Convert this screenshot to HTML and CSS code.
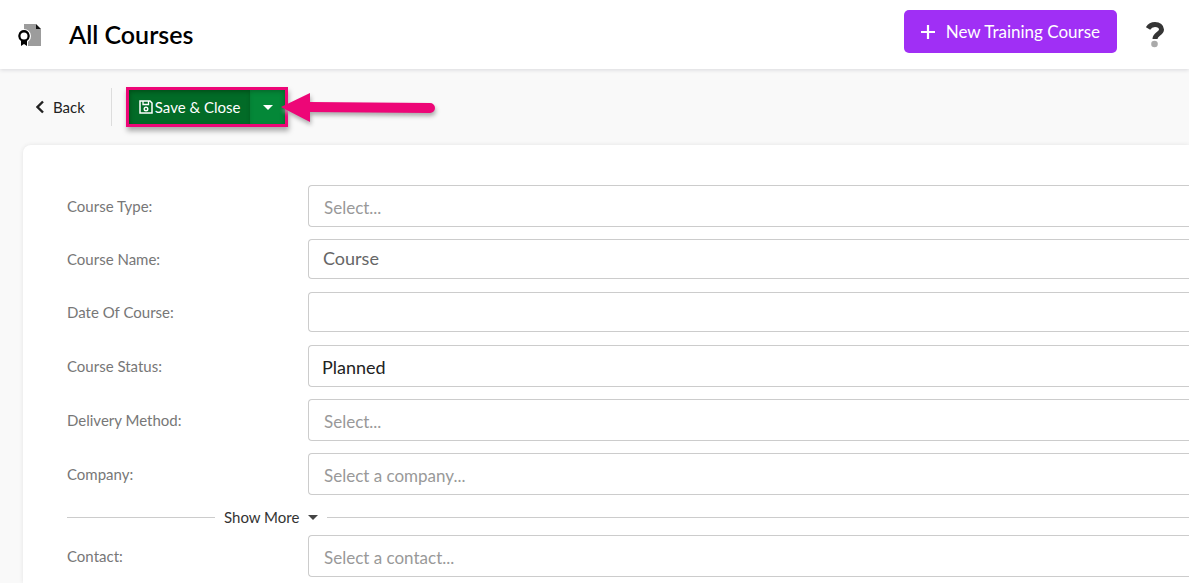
FILE: index.html
```html
<!DOCTYPE html>
<html lang="en">
<head>
    <meta charset="UTF-8">
    <meta name="viewport" content="width=device-width, initial-scale=1.0">
    <title>All Courses</title>
    <link rel="stylesheet" href="styles.css">
</head>
<body>

    <header class="header">
        <svg class="header-icon" width="24" height="24" viewBox="0 0 24 24" aria-hidden="true">
            <path fill="#9c9c9c" d="M6 1h12v5h5v17H6z"/>
            <path fill="#111" d="M18 1l5 5h-5z"/>
            <circle cx="6" cy="13" r="7" fill="#fff"/>
            <path fill="#fff" d="M2 17h8v6H2z"/>
            <path fill="#000" fill-rule="evenodd" d="M6 7a6 6 0 0 1 3 11v5l-3-2-3 2v-5A6 6 0 0 1 6 7zm0 2.500a3.500 3.500 0 1 0 0 7 3.500 3.500 0 0 0 0-7z"/>
        </svg>
        <h1 class="title">All Courses</h1>
        <button type="button" class="new-button">
            <svg width="14" height="14" viewBox="0 0 14 14" aria-hidden="true">
                <path d="M7 0v14M0 7h14" stroke="#fff" stroke-width="2.200"/>
            </svg>
            New Training Course
        </button>
        <button type="button" class="help-button" aria-label="Help">
            <svg width="18" height="26" viewBox="0 0 18 26" aria-hidden="true">
                <path d="M2 6.500C4 3 6.500 2.500 9 2.500C13 2.500 15.500 4.500 15.500 7.500C15.500 12 9 11.500 9 17" fill="none" stroke="#353535" stroke-width="5"/>
                <circle cx="8.500" cy="22" r="3.300" fill="#aaa"/>
            </svg>
        </button>
    </header>

    <div class="toolbar">
        <a href="#" class="back-link">
            <svg width="8" height="14" viewBox="0 0 8 14" aria-hidden="true">
                <path d="M7 1.500L1.500 7L7 12.500" fill="none" stroke="#222" stroke-width="2.400"/>
            </svg>
            Back
        </a>
        <div class="save-group">
            <button type="button" class="save-button">
                <svg width="14" height="14" viewBox="0 0 14 14" fill="none" stroke="#fff" aria-hidden="true">
                    <path d="M1 1h10l2 2v10H1z" stroke-width="1.500"/>
                    <path d="M4 1v3.500h5.500V1" stroke-width="1.300"/>
                    <circle cx="7" cy="9" r="1.800" stroke-width="1.400"/>
                </svg>
                Save &amp; Close
            </button>
            <button type="button" class="save-menu" aria-label="More save options">
                <svg width="10" height="5" viewBox="0 0 10 5" aria-hidden="true"><path d="M0 0h10L5 5z" fill="#fff"/></svg>
            </button>
            <svg class="arrow" width="156" height="36" viewBox="0 0 156 36" aria-hidden="true">
                <path d="M0 17L29 3v9l120 1a5 5 0 0 1 0 10L29 22v10z" fill="#ed0677"/>
            </svg>
        </div>
    </div>

    <form class="card">
        <div class="row">
            <label for="type">Course Type:</label>
            <select id="type" class="field empty"><option>Select...</option></select>
        </div>
        <div class="row row-text">
            <label for="name">Course Name:</label>
            <input id="name" class="field" type="text" value="Course">
        </div>
        <div class="row row-text">
            <label for="date">Date Of Course:</label>
            <input id="date" class="field" type="text">
        </div>
        <div class="row">
            <label for="status">Course Status:</label>
            <select id="status" class="field"><option>Planned</option></select>
        </div>
        <div class="row">
            <label for="method">Delivery Method:</label>
            <select id="method" class="field empty"><option>Select...</option></select>
        </div>
        <div class="row">
            <label for="company">Company:</label>
            <select id="company" class="field empty"><option>Select a company...</option></select>
        </div>
        <div class="divider">
            <button type="button" class="more-button">
                Show More
                <svg width="10" height="5" viewBox="0 0 10 5" aria-hidden="true"><path d="M0 0h10L5 5z" fill="#444"/></svg>
            </button>
        </div>
        <div class="row">
            <label for="contact">Contact:</label>
            <select id="contact" class="field empty"><option>Select a contact...</option></select>
        </div>
    </form>

</body>
</html>
```
FILE: styles.css
```css
* {
    box-sizing: border-box;
}

body {
    margin: 0;
    font-family: Lato, sans-serif;
    font-size: 15px;
    background-color: #f9f9f9;
    color: #222;
}

button,
input,
select {
    font-family: inherit;
    margin: 0;
}

button {
    border: none;
    padding: 0;
    cursor: pointer;
}

/* header */
.header {
    display: flex;
    align-items: center;
    height: 69px;
    padding: 0 25px 0 18px;
    background-color: #fff;
    box-shadow: 0 1px 4px #d8d8dc;
}

.header-icon {
    margin-right: 27px;
}

.title {
    flex: 1;
    margin: 0 0 2px;
    font-size: 25px;
    line-height: 30px;
    font-weight: 600;
    color: #000;
}

.new-button {
    display: flex;
    align-items: center;
    gap: 11px;
    height: 43px;
    margin-bottom: 6px;
    padding: 0 17px;
    border-radius: 5px;
    background-color: #a02ff5;
    color: #fff;
    font-size: 17px;
}

.help-button {
    height: 26px;
    margin-left: 29px;
    background: none;
}

/* toolbar */
.toolbar {
    display: flex;
    align-items: center;
    height: 76px;
    padding-left: 36px;
}

.back-link {
    display: flex;
    align-items: center;
    gap: 9px;
    height: 38px;
    padding-right: 26px;
    border-right: 1px solid #ddd;
    color: #222;
    text-decoration: none;
}

.save-group {
    position: relative;
    display: flex;
    height: 40px;
    margin-left: 14px;
    border: 3px solid #ed0677;
    box-shadow: 1px 4px 5px #aaa;
}

.save-button {
    display: flex;
    align-items: center;
    gap: 2px;
    padding: 0 10px;
    background-color: #026b27;
    box-shadow: inset 1px 2px 4px #005019;
    color: #fff;
    font-size: 15px;
}

.save-menu {
    width: 35px;
    background-color: #048838;
    box-shadow: inset -1px 2px 4px #056b2c;
}

.save-menu svg {
    display: block;
    margin: 0 auto;
}

.arrow {
    position: absolute;
    top: 0;
    left: 152px;
    filter: drop-shadow(1px 3px 2px #aaa);
}

/* form */
.card {
    margin-left: 23px;
    padding: 40px 0 6px 44px;
    border-radius: 8px 0 0 0;
    background-color: #fff;
    box-shadow: 0 0 4px #e4e4e4;
}

.row {
    display: flex;
    align-items: center;
    margin-bottom: 12px;
}

.row-text {
    margin-bottom: 13px;
}

.row:last-child {
    margin-bottom: 0;
}

.row label {
    width: 241px;
    padding-bottom: 1px;
    color: #777;
}

.field {
    flex: 1;
    height: 40px;
    padding: 0 14px 2px;
    border: 1px solid #ccc;
    border-right: none;
    border-radius: 4px 0 0 4px;
    background-color: #fff;
    color: #666;
    font-size: 18px;
    appearance: none;
}

select.field {
    height: 42px;
    padding: 1px 13px 0;
    color: #222;
}

select.empty {
    padding: 2px 15px 0;
    color: #999;
    font-size: 17px;
}

select.field.empty {
    padding: 2px 15px 0;
    color: #999;
}

.divider {
    display: flex;
    align-items: center;
    gap: 9px;
    height: 20px;
    margin: 12px 0 8px;
}

.divider::before,
.divider::after {
    content: "";
    width: 148px;
    border-top: 1px solid #ccc;
}

.divider::after {
    flex: 1;
}

.more-button {
    display: flex;
    align-items: center;
    gap: 9px;
    background: none;
    color: #333;
    font-size: 15px;
}
```
